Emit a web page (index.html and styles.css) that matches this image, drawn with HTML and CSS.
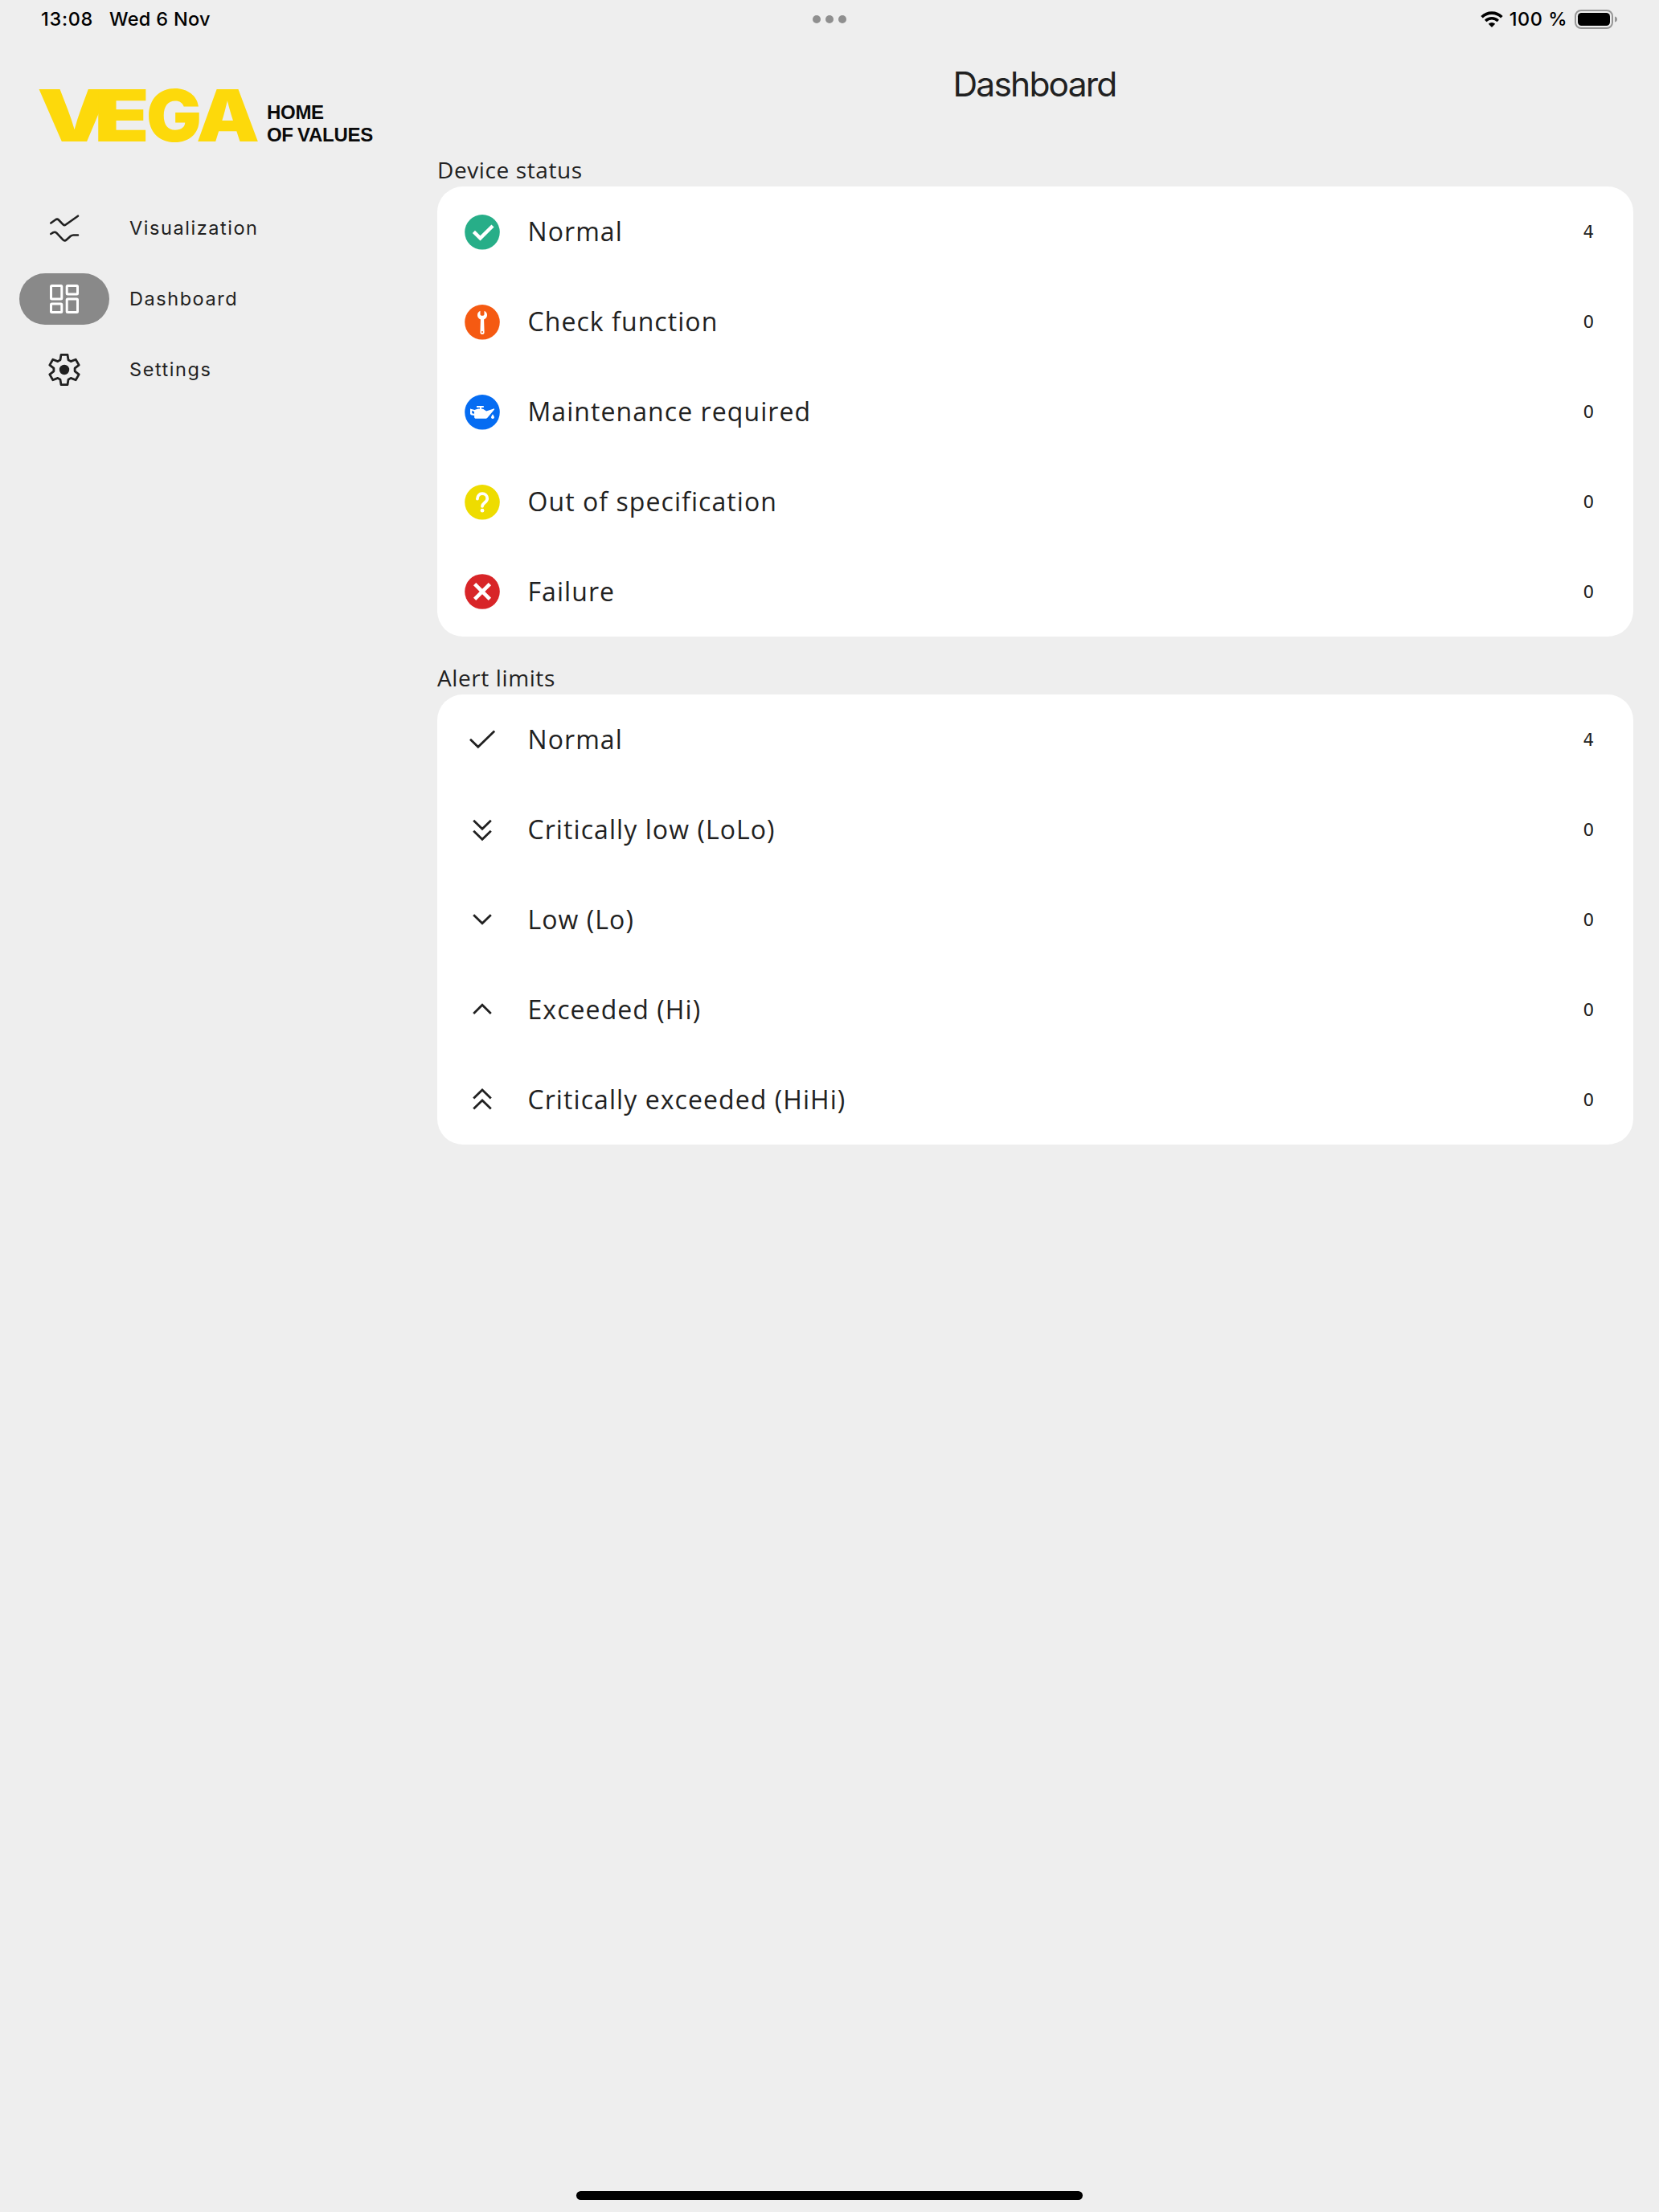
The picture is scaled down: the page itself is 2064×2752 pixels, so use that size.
FILE: index.html
```html
<!DOCTYPE html>
<html lang="en">
<head>
    <meta charset="UTF-8">
    <meta name="viewport" content="width=device-width, initial-scale=1.0">
    <title>Dashboard</title>
    <link rel="stylesheet" href="styles.css">
</head>
<body>

    <div class="status-bar">
        <div class="status-left">
            <span class="time">13:08</span>
            <span class="date">Wed 6 Nov</span>
        </div>
        <div class="dots"><i></i><i></i><i></i></div>
        <div class="status-right">
            <svg class="wifi" viewBox="0 0 28 20">
                <path d="M1.6 7.2a17.6 17.6 0 0 1 24.8 0" fill="none" stroke="#000" stroke-width="3.6"/>
                <path d="M6.2 12a11 11 0 0 1 15.6 0" fill="none" stroke="#000" stroke-width="3.4"/>
                <path d="M14 20l-4.2-4.3a6 6 0 0 1 8.4 0z"/>
            </svg>
            <span class="percent">100 %</span>
            <svg class="battery" viewBox="0 0 54 24">
                <rect x="1" y="1" width="46" height="22" rx="7" fill="none" stroke="#969696" stroke-width="2"/>
                <rect x="4" y="4" width="40" height="16" rx="4.5"/>
                <path d="M50 8.5c2 .5 3 1.8 3 3.5s-1 3-3 3.5z" fill="#969696"/>
            </svg>
        </div>
    </div>

    <div class="layout">
        <aside class="sidebar">
            <div class="logo">
                <svg class="logo-mark" viewBox="0 0 274 66">
                    <text class="wordmark" y="65"><tspan x="-2" textLength="92" lengthAdjust="spacingAndGlyphs">V</tspan><tspan x="69" textLength="69" lengthAdjust="spacingAndGlyphs">E</tspan><tspan x="134" textLength="69" lengthAdjust="spacingAndGlyphs">G</tspan><tspan x="196" textLength="79" lengthAdjust="spacingAndGlyphs">A</tspan></text>
                </svg>
                <div class="claim">HOME<br>OF VALUES</div>
            </div>

            <nav class="nav">
                <a class="nav-item">
                    <span class="nav-icon">
                        <svg viewBox="0 0 48 48" fill="none" stroke="#212121" stroke-width="2.6" stroke-linecap="round" stroke-linejoin="round">
                            <path d="M7.3 17.5l5.6-4q2.2-1.7 4 0l5.6 5.8q1.6 1.5 3.3.2L41 8.7"/>
                            <path d="M7.3 31l3-1.8q2.2-1 3.9.5l8 8.5q2.2 2.2 4.6 0l5-4.4q1.6-1.3 3.6-1.3H41"/>
                        </svg>
                    </span>
                    <span class="nav-text">Visualization</span>
                </a>
                <a class="nav-item active">
                    <span class="nav-icon">
                        <svg viewBox="0 0 48 48" fill="none" stroke="#fff" stroke-width="3">
                            <rect x="7.5" y="7.5" width="13.3" height="16.4" rx="1"/>
                            <rect x="27.2" y="7.5" width="13.3" height="10.4" rx="1"/>
                            <rect x="7.5" y="30.1" width="13.3" height="10.4" rx="1"/>
                            <rect x="27.2" y="24.1" width="13.3" height="16.4" rx="1"/>
                        </svg>
                    </span>
                    <span class="nav-text">Dashboard</span>
                </a>
                <a class="nav-item">
                    <span class="nav-icon">
                        <svg viewBox="-24 -24 48 48">
                            <path fill="none" stroke="#212121" stroke-width="2.8" stroke-linejoin="round" d="M-4-18.6H4L5-12.2 8.1-10.4 14.2-12.8 18.2-5.9 13.1-1.8V1.8L18.2 5.9 14.2 12.8 8.1 10.4 5 12.2 4 18.6H-4L-5 12.2-8.1 10.4-14.2 12.8-18.2 5.9-13.1 1.8V-1.8L-18.2-5.9-14.2-12.8-8.1-10.4-5-12.2z"/>
                            <circle r="6.2" fill="#212121"/>
                        </svg>
                    </span>
                    <span class="nav-text">Settings</span>
                </a>
            </nav>
        </aside>

        <main class="content">
            <h1>Dashboard</h1>

            <h2>Device status</h2>
            <ul class="card">
                <li>
                    <svg viewBox="0 0 48 48">
                        <circle cx="24" cy="24.8" r="21.8" fill="#27ae88"/>
                        <path d="M13.4 24.4l8.1 8L37 17" fill="none" stroke="#fff" stroke-width="4.4"/>
                    </svg>
                    <span class="label">Normal</span><span class="count">4</span>
                </li>
                <li>
                    <svg viewBox="0 0 48 48">
                        <circle cx="24" cy="24.8" r="21.8" fill="#f55a12"/>
                        <path d="M21.5 10.8C19 11.8 18 13.8 18 16c0 2.4 1.3 4.4 3.9 5.4l-.5 16.2a2.6 2.5 0 0 0 5.2 0l-.5-16.2c2.6-1 3.9-3 3.9-5.4 0-2.2-1-4.2-3.5-5.2v4.6l-1.2 1.3h-2.6l-1.2-1.3z" fill="#fff"/>
                        <circle cx="24" cy="37" r="1" fill="#f55a12"/>
                    </svg>
                    <span class="label">Check function</span><span class="count">0</span>
                </li>
                <li>
                    <svg viewBox="0 0 48 48">
                        <circle cx="24" cy="24.8" r="21.8" fill="#056cf2"/>
                        <path fill="#fff" fill-rule="evenodd" d="M9 20.6l5.4 1.5 4.4-1.5 2.2-.2v-1.3h-4v-2.2h8.8v2.2H23v1.3l2.3.6 3.8 2.4L39 20.2v1.4l-8.6 10.2-1.4.9H15.2l-1.1-1.2v-2.4l-4.1-.8-1-1.2zM11 23l.3 3.2 2.7.6v-2.7z"/>
                        <path d="M37 27.2l1.6 2.8c1 1.6 0 3-1.6 3s-2.6-1.4-1.6-3z" fill="#fff"/>
                    </svg>
                    <span class="label">Maintenance required</span><span class="count">0</span>
                </li>
                <li>
                    <svg viewBox="0 0 48 48">
                        <circle cx="24" cy="24.8" r="21.8" fill="#eedc00"/>
                        <path d="M17.9 20.6c.2-3.9 2.6-6.4 6.1-6.4s6.2 2.6 6.2 6.1c0 5-5.9 4.8-6.2 9.6" fill="none" stroke="#fff" stroke-width="3.8" stroke-linecap="round"/>
                        <circle cx="24" cy="35.2" r="2.4" fill="#fff"/>
                    </svg>
                    <span class="label">Out of specification</span><span class="count">0</span>
                </li>
                <li>
                    <svg viewBox="0 0 48 48">
                        <circle cx="24" cy="24" r="21.8" fill="#d82528"/>
                        <path d="M14.6 14.6l18.8 18.8M33.4 14.6L14.6 33.4" stroke="#fff" stroke-width="4.6"/>
                    </svg>
                    <span class="label">Failure</span><span class="count">0</span>
                </li>
            </ul>

            <h2>Alert limits</h2>
            <ul class="card">
                <li>
                    <svg class="line" viewBox="0 0 48 48"><path d="M9 23.8l9.8 9.4L39.2 13.6"/></svg>
                    <span class="label">Normal</span><span class="count">4</span>
                </li>
                <li>
                    <svg class="line" viewBox="0 0 48 48"><path d="M13.2 12.7L24 23.2l10.8-10.5M13.2 25.7L24 36.2l10.8-10.5"/></svg>
                    <span class="label">Critically low (LoLo)</span><span class="count">0</span>
                </li>
                <li>
                    <svg class="line" viewBox="0 0 48 48"><path d="M13.2 18.2L24 28.8l10.8-10.6"/></svg>
                    <span class="label">Low (Lo)</span><span class="count">0</span>
                </li>
                <li>
                    <svg class="line" viewBox="0 0 48 48"><path d="M13.2 28.9L24 18.3l10.8 10.6"/></svg>
                    <span class="label">Exceeded (Hi)</span><span class="count">0</span>
                </li>
                <li>
                    <svg class="line" viewBox="0 0 48 48"><path d="M13.2 22.5L24 12l10.8 10.5M13.2 35.5L24 25l10.8 10.5"/></svg>
                    <span class="label">Critically exceeded (HiHi)</span><span class="count">0</span>
                </li>
            </ul>
        </main>
    </div>

    <div class="home-indicator"></div>

</body>
</html>
```
FILE: styles.css
```css
* {
    box-sizing: border-box;
}

body {
    margin: 0;
    height: 2752px;
    display: flex;
    flex-direction: column;
    font-family: Inter, sans-serif;
    background-color: #eeeeee;
    color: #212121;
}

svg {
    display: block;
}

.status-bar {
    height: 48px;
    padding: 0 51px 0 51px;
    display: grid;
    grid-template-columns: 1fr auto 1fr;
    align-items: center;
    font-size: 23.5px;
    font-weight: 500;
    line-height: 48px;
    color: #000;
}

.status-left {
    display: flex;
    gap: 20px;
}

.time {
    letter-spacing: 0.7px;
}

.date {
    letter-spacing: 0.3px;
}

.dots {
    display: flex;
    gap: 6px;
}

.dots i {
    width: 10px;
    height: 10px;
    border-radius: 50%;
    background-color: #8f8f8f;
}

.status-right {
    display: flex;
    justify-content: flex-end;
    align-items: center;
}

.wifi {
    width: 28px;
    height: 20px;
    margin-right: 8px;
}

.percent {
    margin-right: 9px;
    letter-spacing: 0.5px;
}

.battery {
    width: 54px;
    height: 24px;
}

.layout {
    flex: 1;
    display: flex;
}

.sidebar {
    width: 544px;
    padding: 63px 24px 0;
}

.logo {
    display: flex;
    align-items: flex-end;
    gap: 10px;
    padding-left: 24px;
}

.logo-mark {
    width: 274px;
    height: 66px;
    overflow: visible;
}

.wordmark {
    font-family: Inter, sans-serif;
    font-size: 89.4px;
    font-weight: 900;
    fill: #fdd90b;
}

.claim {
    font-family: "Liberation Sans", sans-serif;
    font-size: 24px;
    font-weight: bold;
    line-height: 28px;
    letter-spacing: -0.3px;
    word-spacing: -1px;
    color: #0a0a0a;
    margin-bottom: -5px;
}

.nav {
    margin-top: 63px;
}

.nav-item {
    height: 88px;
    display: flex;
    align-items: center;
    gap: 25px;
    font-size: 23.5px;
    font-weight: 400;
    letter-spacing: 1.55px;
}

.nav-text {
    padding-bottom: 2px;
}

.nav-icon {
    width: 112px;
    height: 64px;
    border-radius: 32px;
    display: flex;
    align-items: center;
    justify-content: center;
}

.nav-icon svg {
    width: 48px;
    height: 48px;
}

.active .nav-icon {
    background-color: #898989;
}

.content {
    flex: 1;
    padding-right: 32px;
}

h1 {
    margin: 0;
    height: 144px;
    padding-right: 2px;
    font-size: 42.5px;
    font-weight: 400;
    letter-spacing: -1.8px;
    line-height: 113px;
    text-align: center;
}

h2 {
    margin: 0;
    height: 40px;
    font-family: "Open Sans", sans-serif;
    font-size: 28px;
    font-weight: 400;
    letter-spacing: 0.6px;
    line-height: 38px;
}

.card {
    margin: 0 0 32px;
    padding: 0 48px 0 32px;
    list-style: none;
    border-radius: 32px;
    background-color: #fff;
}

.card li {
    height: 112px;
    display: flex;
    align-items: center;
    font-family: "Open Sans", sans-serif;
}

.card svg {
    width: 48px;
    height: 48px;
    margin-right: 32px;
}

.line {
    fill: none;
    stroke: #212121;
    stroke-width: 2.8;
}

.label {
    flex: 1;
    padding: 0 0 1px 0.5px;
    font-size: 32px;
    letter-spacing: 1.07px;
}

.count {
    font-family: "DejaVu Sans", sans-serif;
    font-size: 21.5px;
    letter-spacing: 0.7px;
}

.home-indicator {
    width: 630px;
    height: 11px;
    margin: 0 auto 15px;
    border-radius: 6px;
    background-color: #000;
}
```
